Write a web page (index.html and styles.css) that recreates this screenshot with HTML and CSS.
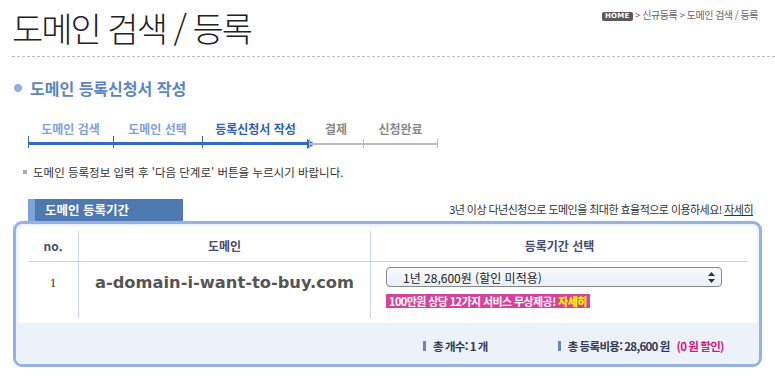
FILE: index.html
```html
<!DOCTYPE html>
<html lang="ko">
<head>
    <meta charset="UTF-8">
    <title>도메인 검색 / 등록</title>
    <link rel="stylesheet" href="styles.css">
</head>
<body>
    <div class="page">
        <div class="top">
            <h1>도메인 검색 / 등록</h1>
            <div class="crumb"><span class="home">HOME</span> &gt; 신규등록 &gt; 도메인 검색 / 등록</div>
        </div>

        <h2 class="sub">도메인 등록신청서 작성</h2>

        <ol class="steps">
            <li class="done s1">도메인 검색</li>
            <li class="done s2">도메인 선택</li>
            <li class="current s3">등록신청서 작성</li>
            <li class="s4">결제</li>
            <li class="s5 last">신청완료</li>
        </ol>

        <p class="note">도메인 등록정보 입력 후 '다음 단계로' 버튼을 누르시기 바랍니다.</p>

        <div class="tabbar">
            <div class="tab">도메인 등록기간</div>
            <div class="tip">3년 이상 다년신청으로 도메인을 최대한 효율적으로 이용하세요! <a href="#">자세히</a></div>
        </div>

        <div class="box">
            <div class="grid">
                <div class="th">no.</div>
                <div class="th line">도메인</div>
                <div class="th line">등록기간 선택</div>

                <div class="td num">1</div>
                <div class="td line domain">a-domain-i-want-to-buy.com</div>
                <div class="td line period">
                    <div class="select">
                        <span>1년 28,600원 (할인 미적용)</span>
                        <svg width="7" height="11" viewBox="0 0 7 11"><path d="M3.5 0L7 4H0z M3.5 11L0 7h7z" fill="#333"/></svg>
                    </div>
                    <div class="promo">100만원 상당 12가지 서비스 무상제공! <b>자세히</b></div>
                </div>
            </div>
            <div class="summary">
                <span class="item">총 개수: 1 개</span>
                <span class="item">총 등록비용: 28,600 원 <em>(0 원 할인)</em></span>
            </div>
        </div>
    </div>
</body>
</html>
```

FILE: styles.css
```css
body {
    margin: 0;
    background: #fff;
    font-family: "Noto Sans CJK KR", "Noto Sans", sans-serif;
    color: #333;
}

.page {
    width: 775px;
}

.top {
    display: flex;
    justify-content: space-between;
    align-items: flex-start;
    margin-left: 12px;
    border-bottom: 1px dashed #bbb;
    height: 56px;
}

h1 {
    margin: 4px 0 0;
    font-size: 34px;
    font-weight: 300;
    line-height: 48px;
    letter-spacing: -2px;
    color: #222;
}

.crumb {
    margin: 8px 17px 0 0;
    font-size: 10px;
    line-height: 14px;
    color: #666;
    letter-spacing: -0.5px;
}

.home {
    display: inline-block;
    background: #5a5a5a;
    color: #fff;
    font-family: "DejaVu Sans", sans-serif;
    font-weight: bold;
    font-size: 7px;
    line-height: 9px;
    padding: 0 3px;
    border-radius: 2px;
    letter-spacing: 0.3px;
    vertical-align: 1px;
}

.sub {
    display: flex;
    align-items: center;
    gap: 8px;
    margin: 20px 0 0 14px;
    font-size: 16px;
    line-height: 22px;
    color: #5b86c5;
    font-weight: bold;
}

.sub::before {
    content: "";
    width: 8px;
    height: 8px;
    border-radius: 50%;
    background: #8fb0e0;
}

.steps {
    display: flex;
    list-style: none;
    margin: 22px 0 0 28px;
    padding: 0;
}

.steps li {
    position: relative;
    text-align: center;
    font-size: 12px;
    line-height: 16px;
    font-weight: bold;
    color: #8a8a8a;
    padding-bottom: 6px;
    border-bottom: 2px solid #bbb;
}

.steps li::before {
    content: "";
    position: absolute;
    left: 0;
    bottom: -5px;
    width: 1px;
    height: 9px;
    background: #bbb;
}

.steps .done,
.steps .current {
    color: #7ea3d8;
    border-bottom: 3px solid #2f6bc2;
    padding-bottom: 5px;
}

.steps .done::before,
.steps .current::before {
    background: #2f6bc2;
    bottom: -6px;
    height: 12px;
}

.steps .current {
    color: #2f62b5;
}

.steps .current::after {
    content: "";
    position: absolute;
    right: -6px;
    bottom: -7px;
    border-left: 8px solid #2f6bc2;
    border-top: 5.5px solid transparent;
    border-bottom: 5.5px solid transparent;
}

.steps .s1 { width: 85px; }
.steps .s2 { width: 89px; }
.steps .s3 { width: 107px; }
.steps .s4 { width: 54px; }
.steps .s5 { width: 75px; }

.steps .last::after {
    content: "";
    position: absolute;
    right: 0;
    bottom: -5px;
    width: 1px;
    height: 9px;
    background: #bbb;
}

.note {
    display: flex;
    align-items: center;
    gap: 6px;
    margin: 19px 0 0 23px;
    font-size: 11.5px;
    line-height: 16px;
    color: #333;
}

.note::before {
    content: "";
    width: 4px;
    height: 4px;
    background: #aaa;
}

.tabbar {
    display: flex;
    justify-content: space-between;
    align-items: flex-end;
    margin: 19px 22px 0 28px;
    height: 22px;
}

.tab {
    width: 138px;
    height: 22px;
    background: #4d79b0;
    border-left: 7px solid #7fa3d6;
    padding-left: 10px;
    color: #fff;
    font-size: 12.5px;
    font-weight: bold;
    line-height: 22px;
}

.tip {
    font-size: 11px;
    line-height: 16px;
    color: #333;
    letter-spacing: -0.55px;
    margin-bottom: 4px;
}

.tip a {
    color: #333;
}

.box {
    margin-left: 13px;
    width: 743px;
    border: 3px solid #94b3e3;
    border-radius: 9px;
    overflow: hidden;
    box-shadow: inset 0 0 4px rgba(120, 150, 200, 0.35);
}

.grid {
    display: grid;
    grid-template-columns: 50px 292px 378px;
    margin: 7px 0 0 12px;
}

.th {
    height: 30px;
    line-height: 30px;
    text-align: center;
    font-size: 12px;
    font-weight: bold;
    color: #474c72;
    border-bottom: 1px solid #c4d5ef;
}

.line {
    border-left: 1px solid #c4d5ef;
}

.td {
    height: 56px;
}

.num {
    text-align: center;
    font-family: "Liberation Serif", serif;
    font-size: 13px;
    padding-top: 13px;
    box-sizing: border-box;
    color: #333;
}

.domain {
    text-align: center;
    font-family: "DejaVu Sans", sans-serif;
    font-weight: bold;
    font-size: 16.3px;
    color: #555;
    padding-top: 11px;
    box-sizing: border-box;
}

.period {
    padding: 5px 0 0 15px;
    box-sizing: border-box;
}

.select {
    display: flex;
    justify-content: space-between;
    align-items: center;
    width: 336px;
    height: 20px;
    box-sizing: border-box;
    padding: 0 6px 0 16px;
    border: 1px solid #888;
    border-radius: 4px;
    background: linear-gradient(#f8fafd, #e9eff9);
    font-size: 12px;
    color: #222;
}

.promo {
    display: inline-block;
    margin-top: 6px;
    background: #d6419a;
    color: #fff;
    font-size: 11px;
    font-weight: bold;
    line-height: 14px;
    padding: 0 3px;
    letter-spacing: -0.6px;
}

.promo b {
    color: #fff200;
}

.summary {
    display: flex;
    margin-top: 5px;
    height: 41px;
    background: #edf1f9;
    padding-left: 407px;
    gap: 70px;
    align-items: center;
    font-size: 11.5px;
    font-weight: bold;
    color: #333a55;
    letter-spacing: -0.7px;
    word-spacing: -0.5px;
}

.summary .item {
    display: flex;
    align-items: center;
    gap: 7px;
    margin-top: 4px;
}

.summary .item::before {
    content: "";
    width: 3px;
    height: 10px;
    background: #6b85b5;
}

.summary em {
    font-style: normal;
    color: #d0177a;
}
```
